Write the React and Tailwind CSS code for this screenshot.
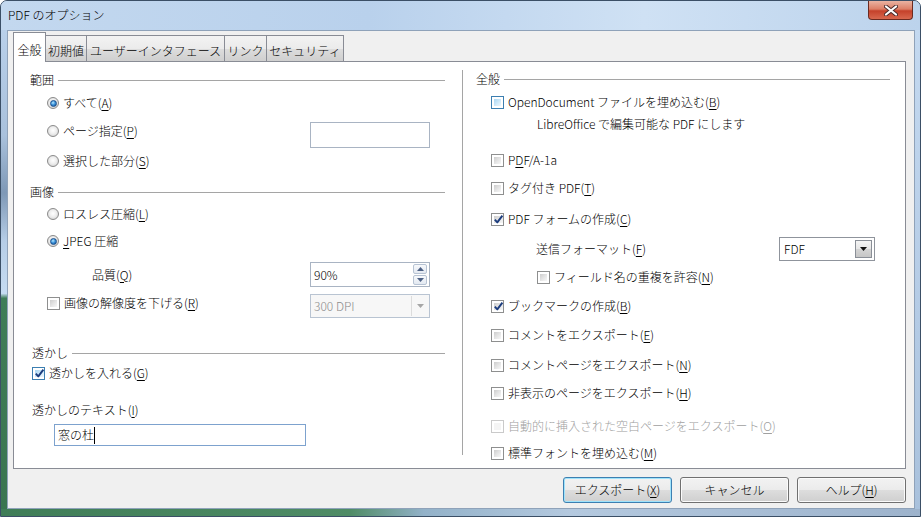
import React from 'react'

const M = ({ k }) => <span className="underline underline-offset-[2px]">{k}</span>

const Radio = ({ checked }) => (
  <span className="w-[12px] h-[12px] rounded-full border border-[#8a8a8a] bg-[radial-gradient(circle_at_50%_45%,#ffffff_0%,#eeeeee_45%,#c9c9c9_100%)] flex items-center justify-center shrink-0">
    {checked && (
      <span className="w-[7px] h-[7px] rounded-full border border-[#1b4f8c] bg-[radial-gradient(circle_at_40%_35%,#b8e8ff_0%,#3d95dc_45%,#114a8e_100%)]" />
    )}
  </span>
)

const Check = ({ checked, hot, disabled }) => {
  const outer = disabled ? 'border-[#cacaca]' : hot ? 'border-[#3c7fb1]' : 'border-[#8e8f8f]'
  const inner = disabled
    ? 'bg-[#f4f4f4]'
    : hot
    ? 'bg-[linear-gradient(135deg,#a9d6f3_0%,#d3ebfa_60%,#eef8fe_100%)]'
    : 'bg-[linear-gradient(135deg,#cdcdcd_0%,#e6e6e6_55%,#f7f7f7_100%)]'
  return (
    <span className={`w-[13px] h-[13px] border ${outer} bg-white p-[2px] flex shrink-0`}>
      <span className={`flex-1 ${inner} flex items-center justify-center`}>
        {checked && (
          <svg width="9" height="9" viewBox="0 0 9 9" className="overflow-visible">
            <path d="M0.8 4.6 L3.3 7.4 L8.4 0.6" fill="none" stroke="#1c3d7e" strokeWidth="1.9" strokeLinejoin="round" />
          </svg>
        )}
      </span>
    </span>
  )
}

const Header = ({ children, className = '' }) => (
  <div className={`flex items-center h-[16px] ${className}`}>
    <span>{children}</span>
    <div className="flex-1 h-px bg-[#a5a5a5] ml-[4px]" />
  </div>
)

const CheckRow = ({ checked, hot, disabled, className = '', children }) => (
  <div className={`flex items-center h-[16px] gap-[4px] ${disabled ? 'text-[#a0a0a0]' : ''} ${className}`}>
    <Check checked={checked} hot={hot} disabled={disabled} />
    <span className="whitespace-nowrap">{children}</span>
  </div>
)

const RadioRow = ({ checked, className = '', children }) => (
  <div className={`flex items-center h-[16px] gap-[4px] ${className}`}>
    <Radio checked={checked} />
    <span className="whitespace-nowrap">{children}</span>
  </div>
)

const tabBase = 'flex items-center justify-center pt-[4px] border border-b-0 border-[#898c95] whitespace-nowrap'
const tabOff = `${tabBase} h-[26px] bg-[linear-gradient(180deg,#f3f3f3_0%,#ebebeb_50%,#dddddd_51%,#cfcfcf_100%)]`

const Button = ({ focused, children }) => (
  <button
    className={`w-[109px] h-[26px] rounded-[3px] border flex items-center justify-center bg-[linear-gradient(180deg,#f2f2f2_0%,#ebebeb_50%,#dddddd_51%,#cfcfcf_100%)] ${
      focused ? 'border-[#3c7fb1] shadow-[inset_0_0_0_1px_#9fe3fb]' : 'border-[#707070] shadow-[inset_0_0_0_1px_#fbfbfb]'
    }`}
  >
    {children}
  </button>
)

const Arrow = ({ up, color = '#4d6185' }) => (
  <svg width="7" height="4" viewBox="0 0 7 4">
    <path d={up ? 'M0 4 L3.5 0 L7 4 Z' : 'M0 0 L7 0 L3.5 4 Z'} fill={color} />
  </svg>
)

export default function App() {
  return (
    <div className="w-[921px] h-[517px] overflow-hidden flex flex-col rounded-t-[7px] border border-[#3b4f66] bg-[#bcd3ec] font-['Noto_Sans_CJK_JP','Noto_Sans',sans-serif] font-light text-[12px] leading-[16px] text-black">
      {/* title bar */}
      <div className="h-[29px] flex items-start bg-[linear-gradient(90deg,#c3d8ef_0%,#b9d1ec_40%,#cfe1f4_70%,#bcd3ec_100%)]">
        <span className="pl-[7px] pt-[6px] text-[12px]">PDF のオプション</span>
        <div className="ml-auto mr-[7px] w-[45px] h-[19px] rounded-b-[4px] border border-t-0 border-[#6b2a20] bg-[linear-gradient(180deg,#eab3a2_0%,#dc7f66_45%,#c5412a_55%,#d8684f_100%)] flex items-center justify-center">
          <svg width="14" height="11" viewBox="0 0 14 11">
            <path d="M2 1.5 L12 9.5 M12 1.5 L2 9.5" stroke="#4a2b2b" strokeWidth="4" strokeLinecap="round" />
            <path d="M2 1.5 L12 9.5 M12 1.5 L2 9.5" stroke="#ffffff" strokeWidth="2.2" strokeLinecap="round" />
          </svg>
        </div>
      </div>

      <div className="flex-1 flex">
        <div className="w-[6px] bg-[linear-gradient(180deg,#b9d0ea_0%,#a9c1dc_22%,#7e98b6_34%,#b6cde6_44%,#c6dcf2_55%,#3f7d57_56%,#3a7550_100%)]" />

        {/* client area */}
        <div className="w-[908px] flex flex-col bg-[#f0f0f0] border border-[#8fa2b9]">
          {/* tabs */}
          <div className="flex items-end h-[29px] mt-[1px] ml-[5px]">
            <div className={`${tabBase} w-[33px] h-[30px] -mb-px relative z-10 bg-white`}>全般</div>
            <div className={`${tabOff} w-[41px] border-l-0`}>初期値</div>
            <div className={`${tabOff} w-[138px] border-l-0`}>ユーザーインタフェース</div>
            <div className={`${tabOff} w-[42px] border-l-0`}>リンク</div>
            <div className={`${tabOff} w-[77px] border-l-0`}>セキュリティ</div>
          </div>

          {/* panel */}
          <div className="flex h-[408px] ml-[5px] mr-[8px] bg-white border border-[#898c95]">
            {/* left column */}
            <div className="w-[448px] flex flex-col">
              <Header className="mt-[10px] pl-[16px] pr-[17px]">範囲</Header>
              <RadioRow checked className="mt-[7px] pl-[33px]">
                すべて(<M k="A" />)
              </RadioRow>
              <div className="flex items-start h-[26px] mt-[11px] pl-[33px] pr-[32px]">
                <div className="flex items-center h-[16px] gap-[4px] mt-[1px]">
                  <Radio />
                  <span>
                    ページ指定(<M k="P" />)
                  </span>
                </div>
                <div className="ml-auto w-[120px] h-[26px] bg-white border border-[#a9b4c3]" />
              </div>
              <RadioRow className="mt-[5px] pl-[33px]">
                選択した部分(<M k="S" />)
              </RadioRow>

              <Header className="mt-[15px] pl-[16px] pr-[17px]">画像</Header>
              <RadioRow className="mt-[6px] pl-[33px]">
                ロスレス圧縮(<M k="L" />)
              </RadioRow>
              <RadioRow checked className="mt-[11px] pl-[33px]">
                <M k="J" />PEG 圧縮
              </RadioRow>
              <div className="flex items-center h-[25px] mt-[13px] pl-[78px] pr-[32px]">
                <span>
                  品質(<M k="Q" />)
                </span>
                <div className="ml-auto w-[120px] h-[25px] bg-white border border-[#a9b4c3] flex">
                  <span className="flex-1 flex items-center pl-[3px]">90%</span>
                  <div className="flex flex-col gap-px py-[1px] pr-[2px]">
                    <div className="w-[14px] flex-1 rounded-[2px] border border-[#b7c3d3] bg-[linear-gradient(180deg,#f7f9fc,#e3e9f1)] flex items-center justify-center">
                      <Arrow up />
                    </div>
                    <div className="w-[14px] flex-1 rounded-[2px] border border-[#b7c3d3] bg-[linear-gradient(180deg,#f7f9fc,#e3e9f1)] flex items-center justify-center">
                      <Arrow />
                    </div>
                  </div>
                </div>
              </div>
              <div className="flex items-start h-[24px] mt-[7px] pl-[33px] pr-[32px]">
                <div className="flex items-center h-[16px] gap-[4px] mt-[1px]">
                  <Check />
                  <span>
                    画像の解像度を下げる(<M k="R" />)
                  </span>
                </div>
                <div className="ml-auto w-[120px] h-[24px] bg-[#f7f7f7] border border-[#b9c4d2] flex text-[#8d8d8d]">
                  <span className="flex-1 flex items-center pl-[3px]">300 DPI</span>
                  <div className="w-[17px] my-[1px] mr-[1px] border-l border-[#dcdcdc] flex items-center justify-center">
                    <Arrow color="#a6a6a6" />
                  </div>
                </div>
              </div>

              <Header className="mt-[27px] pl-[18px] pr-[17px]">透かし</Header>
              <CheckRow checked hot className="mt-[4px] pl-[18px]">
                透かしを入れる(<M k="G" />)
              </CheckRow>
              <div className="h-[16px] mt-[21px] pl-[18px]">
                透かしのテキスト(<M k="I" />)
              </div>
              <div className="mt-[6px] ml-[40px] w-[252px] h-[22px] bg-white border border-[#7da2ce] flex items-center pl-[3px]">
                <span>窓の杜</span>
                <span className="w-px h-[17px] bg-black" />
              </div>
            </div>

            {/* separator */}
            <div className="w-px mt-[8px] mb-[13px] bg-[#a5a5a5]" />

            {/* right column */}
            <div className="flex-1 flex flex-col">
              <Header className="mt-[9px] pl-[13px] pr-[15px]">全般</Header>
              <CheckRow hot className="mt-[7px] pl-[28px]">
                OpenDocument ファイルを埋め込む(<M k="B" />)
              </CheckRow>
              <div className="h-[16px] mt-[6px] pl-[74px]">LibreOffice で編集可能な PDF にします</div>
              <CheckRow className="mt-[20px] pl-[28px]">
                P<M k="D" />F/A-1a
              </CheckRow>
              <CheckRow className="mt-[12px] pl-[28px]">
                タグ付き PDF(<M k="T" />)
              </CheckRow>
              <CheckRow checked className="mt-[15px] pl-[28px]">
                PDF フォームの作成(<M k="C" />)
              </CheckRow>
              <div className="flex items-center h-[24px] mt-[10px] pl-[73px] pr-[30px]">
                <span>
                  送信フォーマット(<M k="F" />)
                </span>
                <div className="ml-auto w-[96px] h-[24px] bg-white border border-[#8f949c] flex p-[2px]">
                  <span className="flex-1 flex items-center pl-[2px]">FDF</span>
                  <div className="w-[17px] border border-[#8a8f97] bg-[linear-gradient(180deg,#f4f4f4_0%,#e6e6e6_50%,#d4d4d4_51%,#c6c6c6_100%)] flex items-center justify-center">
                    <Arrow color="#111111" />
                  </div>
                </div>
              </div>
              <CheckRow className="mt-[8px] pl-[74px]">
                フィールド名の重複を許容(<M k="N" />)
              </CheckRow>
              <CheckRow checked className="mt-[13px] pl-[28px]">
                ブックマークの作成(<M k="B" />)
              </CheckRow>
              <CheckRow className="mt-[13px] pl-[28px]">
                コメントをエクスポート(<M k="E" />)
              </CheckRow>
              <CheckRow className="mt-[14px] pl-[28px]">
                コメントページをエクスポート(<M k="N" />)
              </CheckRow>
              <CheckRow className="mt-[12px] pl-[28px]">
                非表示のページをエクスポート(<M k="H" />)
              </CheckRow>
              <CheckRow disabled className="mt-[17px] pl-[28px]">
                自動的に挿入された空白ページをエクスポート(<M k="O" />)
              </CheckRow>
              <CheckRow className="mt-[11px] pl-[28px]">
                標準フォントを埋め込む(<M k="M" />)
              </CheckRow>
            </div>
          </div>

          {/* buttons */}
          <div className="flex justify-end gap-[8px] mt-[8px] mr-[8px]">
            <Button focused>
              エクスポート(<M k="X" />)
            </Button>
            <Button>キャンセル</Button>
            <Button>
              ヘルプ(<M k="H" />)
            </Button>
          </div>
        </div>

        <div className="flex-1 bg-[linear-gradient(180deg,#c4d9f0_0%,#b4cbe5_60%,#a9c1dc_100%)]" />
      </div>

      <div className="h-[7px] bg-[linear-gradient(90deg,#3f7d57_0%,#4f8c66_38%,#93b2c9_46%,#b4c9df_62%,#9db3cc_100%)]" />
    </div>
  )
}
